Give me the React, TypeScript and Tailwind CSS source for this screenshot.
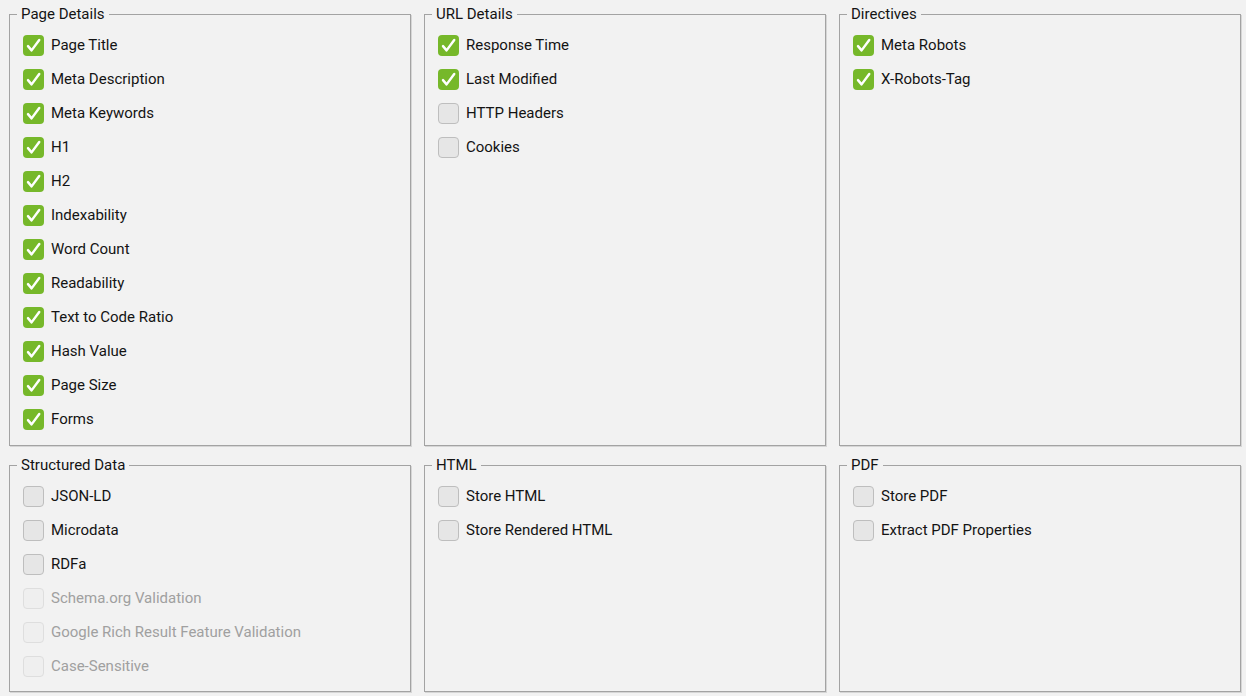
import type { ReactNode } from "react";

type Item = { label: string; checked?: boolean; disabled?: boolean };

type Group = { title: string; items: Item[] };

const TOP: Group[] = [
  {
    title: "Page Details",
    items: [
      "Page Title",
      "Meta Description",
      "Meta Keywords",
      "H1",
      "H2",
      "Indexability",
      "Word Count",
      "Readability",
      "Text to Code Ratio",
      "Hash Value",
      "Page Size",
      "Forms",
    ].map((label) => ({ label, checked: true })),
  },
  {
    title: "URL Details",
    items: [
      { label: "Response Time", checked: true },
      { label: "Last Modified", checked: true },
      { label: "HTTP Headers" },
      { label: "Cookies" },
    ],
  },
  {
    title: "Directives",
    items: [
      { label: "Meta Robots", checked: true },
      { label: "X-Robots-Tag", checked: true },
    ],
  },
];

const BOTTOM: Group[] = [
  {
    title: "Structured Data",
    items: [
      { label: "JSON-LD" },
      { label: "Microdata" },
      { label: "RDFa" },
      { label: "Schema.org Validation", disabled: true },
      { label: "Google Rich Result Feature Validation", disabled: true },
      { label: "Case-Sensitive", disabled: true },
    ],
  },
  {
    title: "HTML",
    items: [{ label: "Store HTML" }, { label: "Store Rendered HTML" }],
  },
  {
    title: "PDF",
    items: [{ label: "Store PDF" }, { label: "Extract PDF Properties" }],
  },
];

function Box({ checked, disabled }: { checked?: boolean; disabled?: boolean }) {
  if (checked) {
    return (
      <span className="flex h-[21px] w-[21px] shrink-0 items-center justify-center rounded-[4px] bg-[#76b82a]">
        <svg width="17" height="17" viewBox="0 0 16 16" fill="none">
          <path
            d="M2.8 8.6 L6.2 12.6 L13.4 2.8"
            stroke="#ffffff"
            strokeWidth="2.3"
            strokeLinecap="round"
            strokeLinejoin="round"
          />
        </svg>
      </span>
    );
  }
  return (
    <span
      className={
        disabled
          ? "h-[21px] w-[21px] shrink-0 rounded-[4px] border border-[#dedede] bg-[#efefef]"
          : "h-[21px] w-[21px] shrink-0 rounded-[4px] border border-[#bebebe] bg-[#e6e6e6]"
      }
    />
  );
}

function Panel({ title, children }: { title: string; children: ReactNode }) {
  return (
    <fieldset className="min-w-0 border border-[#a3a3a3] px-[13px] pt-[6px] shadow-[1px_1px_0_#d6d6d6]">
      <legend className="-ml-[6px] px-[4px] text-[15px] leading-[16px] text-[#141414]">
        {title}
      </legend>
      {children}
    </fieldset>
  );
}

function Fields({ group }: { group: Group }) {
  return (
    <Panel title={group.title}>
      <div className="flex flex-col">
        {group.items.map((item) => (
          <label key={item.label} className="flex h-[34px] items-center gap-[7px]">
            <Box checked={item.checked} disabled={item.disabled} />
            <span
              className={
                item.disabled
                  ? "text-[15px] text-[#a0a0a0]"
                  : "text-[15px] text-[#141414]"
              }
            >
              {item.label}
            </span>
          </label>
        ))}
      </div>
    </Panel>
  );
}

export default function App() {
  return (
    <div
      className="h-[696px] w-[1246px] overflow-hidden bg-[#f2f2f2] pl-[9px] pt-[6px]"
      style={{ fontFamily: "Roboto, 'Liberation Sans', sans-serif" }}
    >
      <div className="grid grid-cols-[402px_402px_402px] grid-rows-[440px_235px] gap-x-[13px] gap-y-[11px]">
        {TOP.map((g) => (
          <Fields key={g.title} group={g} />
        ))}
        {BOTTOM.map((g) => (
          <Fields key={g.title} group={g} />
        ))}
      </div>
    </div>
  );
}
